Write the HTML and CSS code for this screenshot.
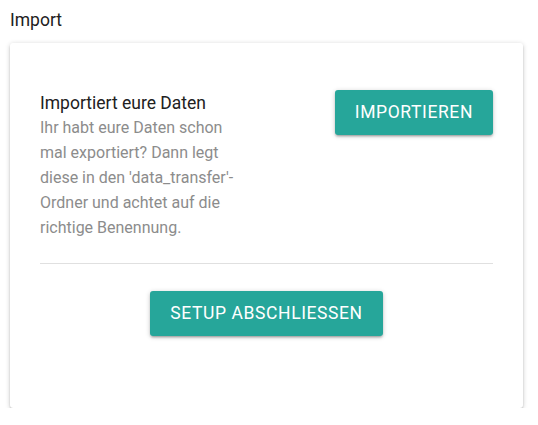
FILE: index.html
```html
<!DOCTYPE html>
<html lang="de">
<head>
<meta charset="utf-8">
<title>Import</title>
<link rel="stylesheet" href="styles.css">
</head>
<body>
<h1 class="page-title">Import</h1>
<div class="card">
  <div class="import-row">
    <div class="import-text">
      <h2 class="import-heading">Importiert eure Daten</h2>
      <p class="import-desc">Ihr habt eure Daten schon mal exportiert? Dann legt diese in den 'data_transfer'-Ordner und achtet auf die richtige Benennung.</p>
    </div>
    <button class="btn">Importieren</button>
  </div>
  <div class="divider"></div>
  <div class="finish-row">
    <button class="btn">Setup abschliessen</button>
  </div>
</div>
</body>
</html>
```
FILE: styles.css
```css
html, body {
  margin: 0;
  padding: 0;
  background: #ffffff;
}
body {
  font-family: Roboto, "Liberation Sans", sans-serif;
  color: rgba(0, 0, 0, 0.87);
  padding: 10px 15px 0 10px;
}
.page-title {
  margin: 0 0 12px 0;
  font-size: 17.5px;
  font-weight: 400;
  line-height: 21px;
  color: #212121;
}
.card {
  background: #fff;
  border-radius: 3px;
  box-shadow: 0 2px 2px 0 rgba(0,0,0,.14), 0 3px 1px -2px rgba(0,0,0,.12), 0 1px 5px 0 rgba(0,0,0,.2);
  padding: 47px 30px 72px 30px;
}
.import-row {
  display: flex;
  justify-content: space-between;
  align-items: flex-start;
}
.import-text {
  width: 212px;
  padding-top: 1px;
}
.import-heading {
  margin: 0;
  font-size: 17.5px;
  font-weight: 400;
  line-height: 24px;
  color: #212121;
}
.import-desc {
  margin: 0;
  font-size: 16px;
  line-height: 25px;
  color: #8c8c8c;
}
.btn {
  font-family: Roboto, "Liberation Sans", sans-serif;
  background: #26a69a;
  color: #fff;
  border: none;
  border-radius: 3px;
  height: 45px;
  line-height: 45px;
  padding: 0 20px;
  font-size: 17.5px;
  letter-spacing: 0.6px;
  text-transform: uppercase;
  box-shadow: 0 2px 2px 0 rgba(0,0,0,.14), 0 3px 1px -2px rgba(0,0,0,.12), 0 1px 5px 0 rgba(0,0,0,.2);
  cursor: pointer;
}
.divider {
  height: 1px;
  background: #e0e0e0;
  margin: 23px 0 27px 0;
}
.finish-row {
  display: flex;
  justify-content: center;
}
```
